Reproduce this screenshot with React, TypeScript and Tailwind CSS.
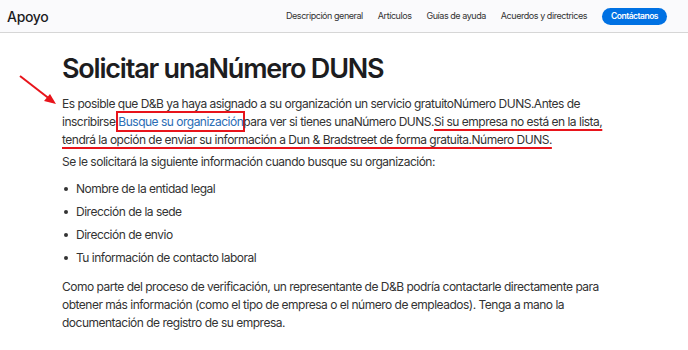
import React from "react";

const navLinks = ["Descripción general", "Artículos", "Guías de ayuda", "Acuerdos y directrices"];

const items = [
  "Nombre de la entidad legal",
  "Dirección de la sede",
  "Dirección de envio",
  "Tu información de contacto laboral",
];

export default function App() {
  return (
    <div className="relative w-[688px] h-[350px] overflow-hidden bg-white text-[#1d1d1f] font-['Inter','Liberation_Sans',sans-serif]">
      {/* Header */}
      <header className="flex items-center h-[33px] pl-[7px] pr-[21px] bg-[#fafafc] border-b border-[#d6d6d6]">
        <span className="text-[14px] font-medium tracking-[-0.3px]">Apoyo</span>
        <nav className="ml-auto flex items-center gap-[15px] text-[9px] tracking-[-0.45px] text-[#333]">
          {navLinks.map((l) => (
            <span key={l}>{l}</span>
          ))}
          <button className="h-[17px] px-[9px] rounded-full bg-[#0071e3] text-white text-[8.5px] tracking-[-0.5px] font-semibold">
            Contáctanos
          </button>
        </nav>
      </header>

      {/* Annotation arrow */}
      <svg className="absolute left-[18px] top-[73px]" width="42" height="36" viewBox="0 0 42 36">
        <line x1="2" y1="3" x2="33" y2="27" stroke="#e8141b" strokeWidth="2" />
        <polygon points="38,31 26,28 32,21" fill="#e8141b" />
      </svg>

      <main className="pl-[62px] pr-[40px] text-[12px] leading-[18px] tracking-[-0.5px] text-[#333]">
        <h1 className="mt-[19px] mb-[9px] text-[27px] leading-[34px] font-semibold tracking-[-1.2px] text-[#1d1d1f]">
          Solicitar unaNúmero DUNS
        </h1>
        <p className="whitespace-nowrap">
          Es posible que D&amp;B ya haya asignado a su organización un servicio gratuitoNúmero DUNS.Antes de
          <br />
          inscribirse,
          <span className="py-[1px] shadow-[0_0_0_2px_#e8141b] text-[#2a6db5]">Busque su organización</span>
          para ver si tienes unaNúmero DUNS.
          <span className="underline decoration-[#e8141b] decoration-2 underline-offset-[3px] [text-decoration-skip-ink:none]">
            Si su empresa no está en la lista,
            <br />
            tendrá la opción de enviar su información a Dun &amp; Bradstreet de forma gratuita.Número DUNS.
          </span>
        </p>
        <p className="mt-[4px]">Se le solicitará la siguiente información cuando busque su organización:</p>
        <ul className="mt-[9px] flex flex-col gap-[5px]">
          {items.map((t) => (
            <li key={t} className="flex items-center h-[18px]">
              <span className="w-[4px] h-[4px] rounded-full bg-[#333] ml-[2px] mr-[8px]" />
              {t}
            </li>
          ))}
        </ul>
        <p className="mt-[11px] whitespace-nowrap">
          Como parte del proceso de verificación, un representante de D&amp;B podría contactarle directamente para
          <br />
          obtener más información (como el tipo de empresa o el número de empleados). Tenga a mano la
          <br />
          documentación de registro de su empresa.
        </p>
      </main>
    </div>
  );
}
